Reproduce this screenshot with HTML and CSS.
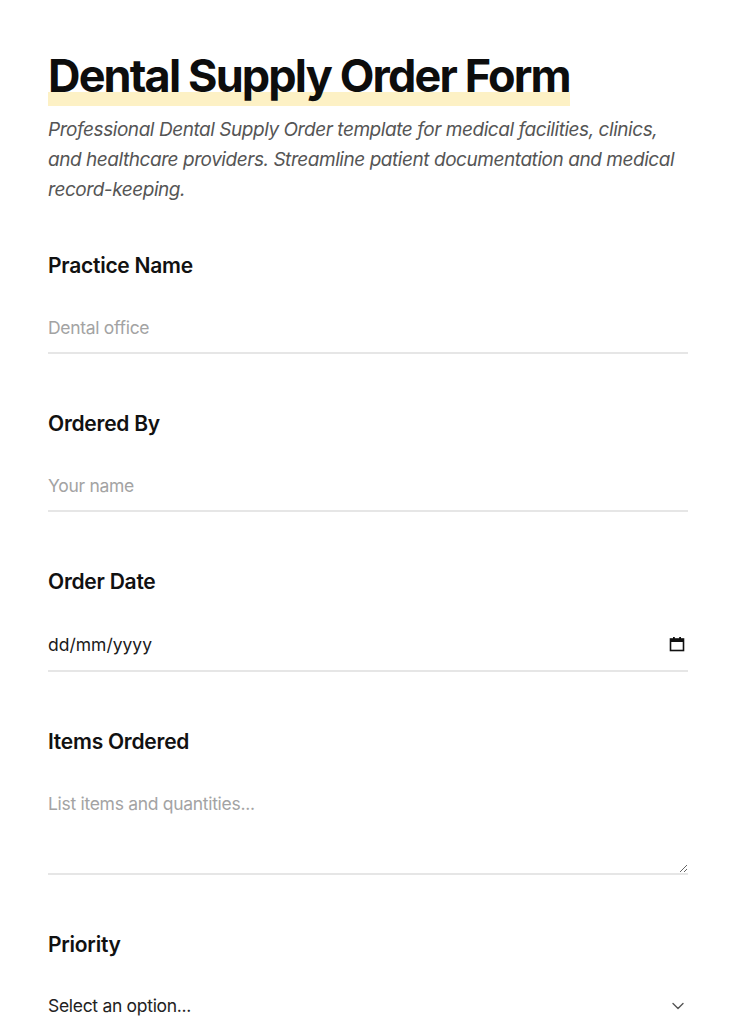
FILE: index.html
```html
<!DOCTYPE html>
<html lang="en-GB">
<head>
<meta charset="utf-8">
<title>Dental Supply Order Form</title>
<link rel="stylesheet" href="styles.css">
</head>
<body>
<main class="page">
  <header class="intro">
    <h1 class="title"><span class="title-mark">Dental Supply Order Form</span></h1>
    <p class="lede">Professional Dental Supply Order template for medical facilities, clinics, and healthcare providers. Streamline patient documentation and medical record-keeping.</p>
  </header>
  <form class="form">
    <div class="field">
      <label class="label" for="practice">Practice Name</label>
      <input class="control" id="practice" type="text" placeholder="Dental office">
    </div>
    <div class="field">
      <label class="label" for="orderedby">Ordered By</label>
      <input class="control" id="orderedby" type="text" placeholder="Your name">
    </div>
    <div class="field">
      <label class="label" for="orderdate">Order Date</label>
      <div class="date-wrap">
        <input class="control control-date" id="orderdate" type="text" placeholder="dd/mm/yyyy">
        <svg class="cal" width="16" height="16" viewBox="0 0 16 16" aria-hidden="true">
          <rect x="1.5" y="3" width="13" height="11.5" fill="none" stroke="#111" stroke-width="1.6"/>
          <rect x="1.5" y="3" width="13" height="3" fill="#111"/>
          <rect x="4" y="1" width="1.8" height="3" fill="#111"/>
          <rect x="10.2" y="1" width="1.8" height="3" fill="#111"/>
        </svg>
      </div>
    </div>
    <div class="field">
      <label class="label" for="items">Items Ordered</label>
      <textarea class="control control-area" id="items" placeholder="List items and quantities..."></textarea>
    </div>
    <div class="field">
      <label class="label" for="priority">Priority</label>
      <div class="select-wrap">
        <select class="control control-select" id="priority">
          <option>Select an option...</option>
          <option>Standard</option>
          <option>Urgent</option>
        </select>
        <svg class="chevron" width="14" height="14" viewBox="0 0 14 14" aria-hidden="true"><path d="M2 4.5 L7 9.5 L12 4.5" fill="none" stroke="#555" stroke-width="1.4" stroke-linecap="round" stroke-linejoin="round"/></svg>
      </div>
    </div>
  </form>
</main>
</body>
</html>
```
FILE: styles.css
```css
* { box-sizing: border-box; }
html, body { margin: 0; padding: 0; background: #ffffff; }
body {
  font-family: "Inter", "Liberation Sans", sans-serif;
  color: #111111;
}
.page {
  padding: 48px 48px 0;
}
.intro {
  margin-bottom: 47px;
}
.title {
  margin: 0;
  font-size: 45px;
  line-height: 56px;
  font-weight: 700;
  letter-spacing: -1.85px;
  color: #0d0d0d;
}
.title-mark {
  background: linear-gradient(to bottom, transparent 0, transparent 76%, #fdf1c5 76%, #fdf1c5 100%);
  padding-bottom: 3px;
}
.lede {
  margin: 11px 0 0;
  font-size: 19px;
  line-height: 30px;
  font-style: italic;
  color: #555555;
  letter-spacing: -0.45px;
}
.form {
  display: flex;
  flex-direction: column;
  gap: 56px;
}
.field {
  display: flex;
  flex-direction: column;
  gap: 22px;
}
.label {
  font-size: 21px;
  line-height: 28px;
  font-weight: 600;
  letter-spacing: -0.25px;
  color: #111111;
}
.control {
  display: block;
  width: 100%;
  border: 0;
  border-bottom: 2px solid #e6e6e6;
  background: transparent;
  padding: 0;
  margin: 0;
  height: 52px;
  font-family: "Inter", "Liberation Sans", sans-serif;
  font-size: 17.5px;
  color: #222222;
  letter-spacing: -0.3px;
  outline: none;
  border-radius: 0;
}
.control::placeholder { color: #a3a3a3; }
.date-wrap { position: relative; }
.control-date { height: 54px; }
.control-date::placeholder { color: #1a1a1a; letter-spacing: 0; }
.cal {
  position: absolute;
  right: 3px;
  top: 18px;
  pointer-events: none;
}
.control-area {
  height: 97px;
  padding-top: 15px;
  line-height: 22px;
  resize: vertical;
}
.select-wrap { position: relative; }
.control-select {
  appearance: none;
  -webkit-appearance: none;
  height: 50px;
}
.chevron {
  position: absolute;
  right: 3px;
  top: 18px;
  pointer-events: none;
}
```
